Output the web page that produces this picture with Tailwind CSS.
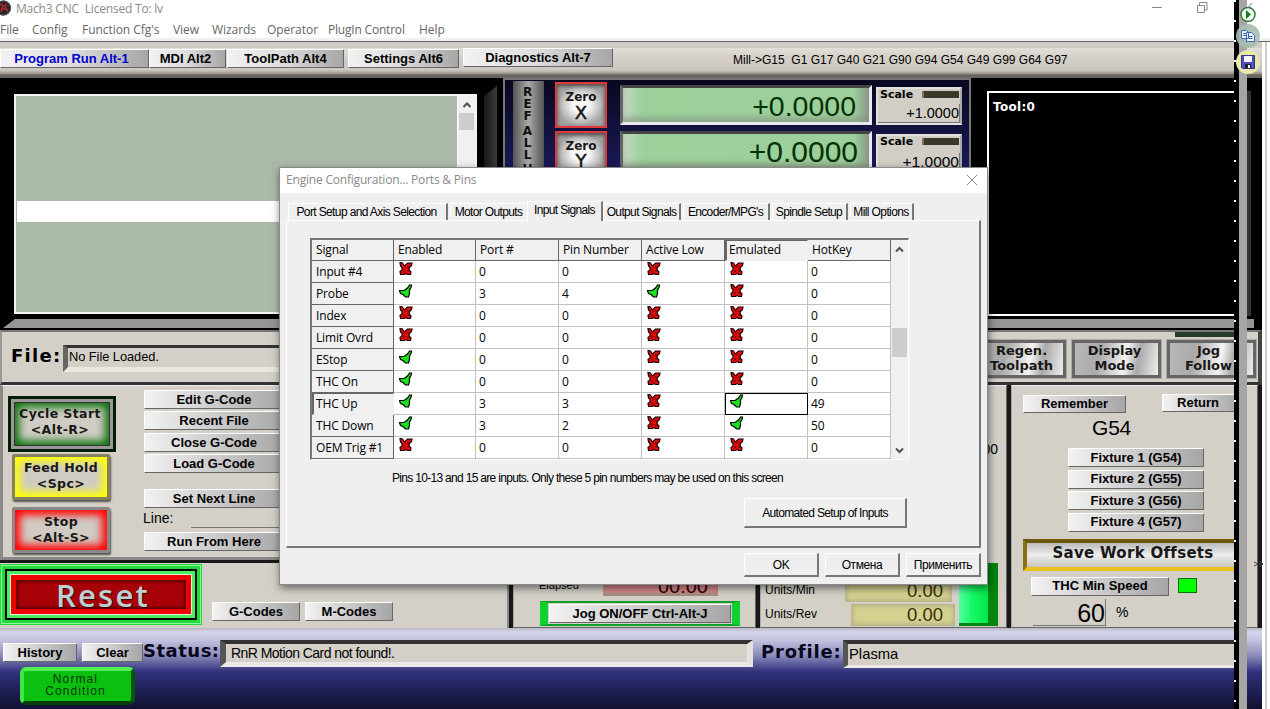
<!DOCTYPE html>
<html lang="en">
<head>
  <meta charset="UTF-8">
  <title>Mach3 CNC</title>
  <script src="https://cdn.jsdelivr.net/npm/@tailwindcss/browser@4"></script>
</head>
<body class="overflow-hidden bg-white font-['Liberation_Sans',Arial,sans-serif] text-black">

<!-- shared icons -->
<svg class="hidden">
  <symbol id="cross" viewBox="0 0 14 14">
    <path d="M1 .5l2.500.5L5 3.500h1L8.500 1H13l-.5 2.500L10 6l.5 2.500L12 10l-.5 2.500H8.500L7 11.500l-1.500 1h-4L1 9.500 3 8V5.500L1.500 4z" fill="#e00c0c" stroke="#1a0000" stroke-width="1.200" />
    <path d="M5.500 4.500l1 1.500M9 4L8 5.500M4.500 10.500L6 8M8.500 8l1 2" stroke="#500" stroke-width=".9" />
  </symbol>
  <symbol id="check" viewBox="0 0 14 14">
    <path d="M.5 6.500H5L8.500 4l2-3h2l-.5 2.500-1.500 2.500v3.500l-1 3.500H6.500L4 10.500l-2.500-1z" fill="#1be01b" stroke="#000" stroke-width="1.200" />
  </symbol>
</svg>

<div class="relative flex h-[709px] w-[1270px] flex-col overflow-hidden">

  <!-- title bar -->
  <header class="flex h-[19px] shrink-0 items-center font-['Open_Sans','Noto_Sans',sans-serif] text-xs tracking-[-.2px] text-[#8a8a8a]">
    <svg class="-mt-[3px] -ml-[4px] h-[16px] w-[16px]" viewBox="0 0 16 16"><circle cx="7.500" cy="8" r="7.500" fill="#2c2425" /><path d="M4 4l4 2 3-2M5 12l2-6M9 6l3 6M5 9h6" stroke="#b02a2a" stroke-width="1.500" fill="none" /><circle cx="7.500" cy="8" r="7" fill="none" stroke="#555" /></svg>
    <span class="-mt-px ml-1 whitespace-pre">Mach3 CNC  Licensed To: lv</span>
    <svg class="-mt-[4px] ml-auto mr-[62px] h-3 w-[56px]" viewBox="0 0 56 12" fill="none" stroke="#888"><path d="M0 5.500h10M45.500 3.500h7v7h-7zM47.500 3v-2.500h7.500v7.500h-2.500" /></svg>
  </header>
  <nav class="flex h-[19px] shrink-0 items-center pt-[3px] font-['Open_Sans','Noto_Sans',sans-serif] text-xs tracking-[-.05px] text-[#666]">
    <span class="w-8">File</span><span class="w-[50px]">Config</span><span class="w-[91px]">Function Cfg's</span><span class="w-[39px]">View</span><span class="w-[55px]">Wizards</span><span class="w-[61px]">Operator</span><span class="w-[91px] tracking-[-.2px]">PlugIn Control</span><span>Help</span>
  </nav>
  <div class="h-[4px] shrink-0 border-b border-[#666] bg-[#f0f0f0]"></div>

  <div class="flex min-h-0 grow">
  <div class="flex w-[1262px] shrink-0 flex-col">

    <!-- screen tabs -->
    <div class="flex h-[36px] shrink-0 items-start bg-[linear-gradient(#d0ccc4_0,#d0ccc4_6px,#e2dfd9_6px,#d6d2cb_14px,#cbc7bf_28px,#a8a39d_31px,#6b655f_33px,#6b655f_36px)] pt-[7px] [&>button]:h-[19px] [&>button]:border [&>button]:border-t-white [&>button]:border-r-[#666] [&>button]:border-b-[#666] [&>button]:border-l-white [&>button]:bg-linear-to-r [&>button]:from-[#f2f2f2] [&>button]:via-[#dcdcdc] [&>button]:to-[#a6a6a6] [&>button]:text-[13px] [&>button]:leading-4 [&>button]:font-bold [&>button]:whitespace-nowrap">
      <button class="w-[149px] pr-[6px] text-[#0000cc]">Program Run Alt-1</button>
      <button class="w-[77px] pr-1">MDI Alt2</button>
      <button class="ml-px w-[117px]">ToolPath Alt4</button>
      <button class="ml-1 w-[111px]">Settings Alt6</button>
      <button class="-mt-px ml-1 w-[150px]">Diagnostics Alt-7</button>
      <span class="mt-[3px] ml-[120px] text-xs leading-4 whitespace-pre">Mill-&gt;G15  G1 G17 G40 G21 G90 G94 G54 G49 G99 G64 G97</span>
    </div>

    <!-- program list, DROs and tool path -->
    <div class="flex h-[252px] shrink-0 bg-black">
      <div class="flex h-full w-[503px] flex-col pt-4">
        <div class="flex h-[220px]">
          <div class="ml-[14px] flex w-[463px] border-2 border-[#f4f4f4] bg-[#abbaa8] pl-px">
            <div class="flex grow flex-col pt-[105px]"><div class="h-[21px] bg-white"></div></div>
            <div class="flex w-[18px] flex-col items-center border-l border-white bg-[#f0f0f0]">
              <svg class="mt-[6px] h-[6px] w-2" viewBox="0 0 8 6" fill="none" stroke="#505050" stroke-width="2"><path d="M.5 5L4 1.500 7.500 5" /></svg>
              <div class="mt-[5px] h-[17px] w-[15px] bg-[#cdcdcd]"></div>
            </div>
          </div>
          <div class="-mt-2 ml-[7px] h-[228px] w-[13px] bg-linear-to-r from-[#181818] to-[#3b3b3b] [clip-path:polygon(0_10px,100%_0,100%_100%,0_100%)]"></div>
        </div>
        <div class="mt-[5px] ml-[3px] h-[9px] bg-[#969696] [clip-path:polygon(12px_0,100%_0,100%_100%,0_100%)]"></div>
      </div>

      <div class="flex h-full w-[468px] border-2 border-[#777] bg-linear-to-b from-[#080820] via-[#1c1c60] via-40% to-[#151540]">
        <div class="mt-px ml-2 flex w-[31px] flex-col items-center bg-linear-to-r from-[#555] via-[#aaa] to-[#555] pt-[5px] pr-[2px] font-['DejaVu_Sans',Verdana,sans-serif] text-[12px] leading-[12px] font-bold text-[#111]">
          <span>R</span><span>E</span><span>F</span><span class="mt-[3px]">A</span><span>L</span><span>L</span><span class="mt-[2px]">H</span>
        </div>
        <div class="mt-[2px] ml-[11px] flex w-[52px] flex-col gap-[3px] [&>button]:flex [&>button]:h-[46px] [&>button]:flex-col [&>button]:items-center [&>button]:border-2 [&>button]:border-[#e03838] [&>button]:bg-[radial-gradient(#f8f8f8_25%,#a4a4a4_70%)] [&>button]:pt-[6px] [&>button]:font-['DejaVu_Sans',Verdana,sans-serif] [&>button]:text-[#181818] [&>button]:inset-shadow-sm [&>button]:inset-shadow-black/60">
          <button><span class="text-xs leading-[15px] font-bold">Zero</span><span class="text-[18px] leading-[15px] [-webkit-text-stroke:.5px_#181818]">X</span></button>
          <button><span class="text-xs leading-[15px] font-bold">Zero</span><span class="text-[18px] leading-[14px] [-webkit-text-stroke:.5px_#181818]">Y</span></button>
        </div>
        <div class="mt-[5px] ml-[13px] flex w-[252px] flex-col gap-[6px] text-right text-[28.500px] leading-[37px] text-[#063006] [&>div]:h-10 [&>div]:border-[3px] [&>div]:border-t-[#444] [&>div]:border-r-[#e8e8f0] [&>div]:border-b-[#e8e8f0] [&>div]:border-l-[#666] [&>div]:bg-[linear-gradient(90deg,#c6d8c4,#9bd09b_8%,#9bcf9b_94%,#8a9688)] [&>div]:inset-shadow-[0_-5px_5px_#88918199]">
          <div class="pr-[13px]">+0.0000</div>
          <div class="pr-[11px] text-[30px] leading-[35px]">+0.0000</div>
        </div>
        <div class="mt-[7px] ml-1 flex w-[86px] flex-col gap-[9px] [&>div]:h-[38px] [&>div]:border-2 [&>div]:border-[#e4e2de] [&>div]:border-r-[#aaa] [&>div]:bg-[#d2cec6]">
          <div>
            <div class="flex h-[15px] justify-between pl-[2px] font-['DejaVu_Sans',Verdana,sans-serif] text-[11px] leading-[11px] font-bold">Scale<i class="mt-[2px] mr-px h-[7px] w-[37px] border-l-2 border-[#77736a] bg-[#3a3828]"></i></div>
            <div class="border-r border-b border-[#777] text-right text-[14.500px] leading-[18px]">+1.0000</div>
          </div>
          <div>
            <div class="flex h-[17px] justify-between pl-[2px] font-['DejaVu_Sans',Verdana,sans-serif] text-[11px] leading-[11px] font-bold">Scale<i class="mt-[2px] mr-px h-[7px] w-[37px] border-l-2 border-[#77736a] bg-[#3a3828]"></i></div>
            <div class="border-r border-[#777] text-right text-[15.500px] leading-[17px]">+1.0000</div>
          </div>
        </div>
      </div>

      <div class="flex grow flex-col pt-[13px]">
        <div class="flex h-[225px]">
          <div class="ml-4 w-[255px] border-2 border-white pt-[6px] pl-[4px] font-['DejaVu_Sans',Verdana,sans-serif] text-xs leading-4 font-bold tracking-[.3px] text-white">Tool:0</div>
          <div class="ml-px w-2 bg-[#333]"></div>
        </div>
        <div class="mt-[3px] mr-2 h-[9px] bg-[#969696]"></div>
      </div>
    </div>

    <!-- loaded file -->
    <div class="relative flex h-[55px] shrink-0 items-start border-t-2 border-r-[4px] border-b-[3px] border-l-2 border-t-[#777] border-r-[#444] border-b-[#333] border-l-[#999] bg-[#d4d0c8]">
      <div class="absolute top-0 left-[1173px] h-[5px] w-[70px] bg-[#263a2a]"></div>
      <span class="mt-[12px] ml-[9px] w-[52px] shrink-0 font-['DejaVu_Sans',Verdana,sans-serif] text-[18px] leading-6 font-bold tracking-[1.300px]">File:</span>
      <div class="mt-[13px] h-[27px] w-[420px] shrink-0 border-t-[3px] border-b-[5px] border-l-[5px] border-t-[#333] border-b-[#eae7e2] border-l-[#666] pl-px text-[12.800px] leading-[18px] tracking-[-.03px]">No File Loaded.</div>
      <div class="mt-[8px] ml-[494px] flex shrink-0 gap-[6px] font-['DejaVu_Sans',Verdana,sans-serif] text-[13px] leading-[15px] font-bold text-[#181818] [&>button]:h-[38px] [&>button]:w-[89px] [&>button]:border-[3px] [&>button]:border-[#666] [&>button]:bg-[linear-gradient(100deg,#b8b8b8,#aaa_30%,#f4f4f4_60%,#aaa_75%,#eee)] [&>button]:pb-[2px] [&>button]:outline [&>button]:outline-[#aaa]">
        <button>Regen.<br>Toolpath</button>
        <button class="pr-1">Display<br>Mode</button>
        <button class="pr-[6px]">Jog<br>Follow</button>
      </div>
    </div>

    <!-- lower panels -->
    <div class="flex h-[243px] shrink-0 gap-[4px] bg-[#181818] pr-1 [&>section]:border [&>section]:border-t-[#eee] [&>section]:border-r-[#666] [&>section]:border-b-[#666] [&>section]:border-l-[#aaa] [&>section]:bg-[#d4d0c8]">
      <div class="flex w-[509px] shrink-0 flex-col gap-[3px]">
        <section class="flex h-[175px] border-t border-r-2 border-b-[3px] border-l-[3px] border-[#888] border-t-[#eee] bg-[#d4d0c8]">
          <div class="mt-[10px] ml-[5px] flex w-[108px] flex-col font-['DejaVu_Sans',Verdana,sans-serif] text-[12.500px] leading-[16px] font-bold tracking-[.4px] text-[#181818]">
            <button class="h-[56px] border-[3px] border-[#051c08] bg-[#999] p-[3px]"><span class="block h-full border border-[#333] bg-[#d0ccc4] pt-[3px] pr-1 tracking-[.4px] inset-shadow-[0_0_9px_4px_#087008]">Cycle Start<br>&lt;Alt-R&gt;</span></button>
            <button class="mt-[2px] ml-[4px] h-[46px] w-[98px] rounded-xs border-[3px] border-[#85815f] bg-[#d0ccc4] pb-[2px] inset-shadow-[0_0_8px_5px_#ffff00] shadow-[1px_2px_2px_#555]">Feed Hold<br>&lt;Spc&gt;</button>
            <button class="mt-[7px] ml-[4px] h-[46px] w-[98px] rounded-xs border-[3px] border-[#888] bg-[#d0ccc4] inset-shadow-[0_0_8px_5px_#ff0000] shadow-[1px_2px_2px_#555]">Stop<br>&lt;Alt-S&gt;</button>
          </div>
          <div class="mt-[4px] ml-[28px] flex w-[144px] flex-col [&>button]:h-[19px] [&>button]:border [&>button]:border-t-white [&>button]:border-r-[#666] [&>button]:border-b-[#666] [&>button]:border-l-white [&>button]:bg-linear-to-r [&>button]:from-[#f2f2f2] [&>button]:to-[#a6a6a6] [&>button]:pr-1 [&>button]:text-[13px] [&>button]:leading-4 [&>button]:font-bold">
            <button>Edit G-Code</button>
            <button class="mt-[2px]">Recent File</button>
            <button class="mt-[3px]">Close G-Code</button>
            <button class="mt-[2px]">Load G-Code</button>
            <button class="mt-[16px]">Set Next Line</button>
            <div class="-ml-px flex h-[22px] pt-[2px] text-sm leading-4">Line:<i class="ml-[18px] h-[18px] w-[120px] border-b border-[#777]"></i></div>
            <button class="mt-[2px]">Run From Here</button>
          </div>
        </section>
        <section class="flex grow border-r-2 border-[#888] bg-[#d4d0c8]">
          <div class="mt-px h-[61px] w-[202px] border-[5px] border-[#25d83c] bg-black outline-1 -outline-offset-2 outline-[#8cff98]">
            <div class="m-[2px] h-[47px] border-[3px] border-[#4bee62] bg-[#d8f8d8] p-px">
              <button class="block h-[39px] w-full border-[5px] border-[#f00000] bg-[#a80008] pl-1 font-['Open_Sans','Noto_Sans',sans-serif] text-[31px] leading-[26px] font-semibold tracking-[2.200px] text-[#bcd0d4] [text-shadow:1px_1px_1px_#300] inset-shadow-[0_0_3px_2px_#600000]">Reset</button>
            </div>
          </div>
          <div class="mt-[39px] ml-[10px] flex gap-[5px] [&>button]:h-[19px] [&>button]:w-[88px] [&>button]:border [&>button]:border-t-white [&>button]:border-r-[#666] [&>button]:border-b-[#666] [&>button]:border-l-white [&>button]:bg-linear-to-r [&>button]:from-[#f2f2f2] [&>button]:to-[#a6a6a6] [&>button]:text-[13px] [&>button]:leading-4 [&>button]:font-bold">
            <button>G-Codes</button>
            <button>M-Codes</button>
          </div>
        </section>
      </div>

      <section class="flex w-[243px] shrink-0 flex-col justify-end border-b-2 border-l-4 pb-px">
        <div class="flex h-[22px]">
          <span class="ml-[25px] w-[64px] text-[11px] leading-[22px]">Elapsed</span>
          <div class="h-[22px] w-[115px] bg-[#d88a8e] pr-[10px] text-right text-[20px] leading-[25px] text-[#300] inset-shadow-[0_-3px_3px_#a09080]">00:00</div>
        </div>
        <div class="mt-[5px] ml-[26px] w-[200px] border-x-8 border-y-2 border-x-[#10d030] border-y-[#10a028] bg-[#d4d0c8] p-px">
          <button class="block h-[19px] w-full border border-t-white border-r-[#666] border-b-[#666] border-l-white bg-linear-to-r from-[#f2f2f2] to-[#a6a6a6] text-[13px] leading-4 font-bold">Jog ON/OFF Ctrl-Alt-J</button>
        </div>
      </section>

      <section class="flex w-[247px] shrink-0 items-end justify-between border-b-2 border-l-4 pb-px">
        <div class="flex w-[194px] flex-col gap-[2px] pl-[4px] text-xs leading-5">
          <div class="flex h-[22px]"><span class="w-[80px] shrink-0">Units/Min</span><div class="w-[107px] shrink-0 bg-[#d4d190] pr-[9px] text-right text-[18.500px] leading-[22px] text-[#333000] inset-shadow-[0_0_4px_2px_#b4b08a]">0.00</div></div>
          <div class="flex h-[22px]"><span class="w-[86px] shrink-0">Units/Rev</span><div class="w-[104px] shrink-0 bg-[#d4d190] pr-[12px] text-right text-[18.500px] leading-[22px] text-[#333000] inset-shadow-[0_0_4px_2px_#b4b08a]">0.00</div></div>
        </div>
        <div class="mr-[8px] flex h-full w-[39px] flex-col justify-between">
          <span class="mt-[53px] text-right text-sm leading-5 whitespace-nowrap">0.00</span>
          <div class="h-[63px] border-r-[10px] border-b-[3px] border-[#008510] bg-linear-to-r from-[#50ffa4] via-[#18fa68] via-40% to-[#00e848]"></div>
        </div>
      </section>

      <section class="flex grow flex-col border-r-4 border-b-2 border-l-4 pl-[3px] [&_button]:border [&_button]:border-t-white [&_button]:border-r-[#666] [&_button]:border-b-[#666] [&_button]:border-l-white [&_button]:bg-linear-to-r [&_button]:from-[#f2f2f2] [&_button]:to-[#a6a6a6] [&_button]:text-[13px] [&_button]:leading-4 [&_button]:font-bold">
        <div class="mt-[8px] ml-[8px] flex">
          <button class="mt-px h-[18px] w-[103px]">Remember</button>
          <button class="ml-[36px] h-[18px] w-[80px] pr-2">Return</button>
        </div>
        <span class="mt-[2px] ml-[77px] text-[21px] leading-[26px] tracking-[-.2px]">G54</span>
        <div class="mt-[7px] ml-[53px] flex w-[136px] flex-col gap-[2.500px] [&>button]:h-[19px]">
          <button>Fixture 1 (G54)</button>
          <button>Fixture 2 (G55)</button>
          <button>Fixture 3 (G56)</button>
          <button>Fixture 4 (G57)</button>
        </div>
        <div class="mt-[7px] ml-[8px] flex h-[32px] w-[222px] items-center justify-center border-4 border-t-[#6d5708] border-r-[#a88b18] border-b-[#e8c020] border-l-[#8b7010] bg-linear-to-b from-[#bbb] via-[#eee] to-[#c8c4bc] pr-[2px] pb-[3px] font-['DejaVu_Sans',Verdana,sans-serif] text-[15px] font-bold tracking-[.3px] text-[#181818]">Save Work Offsets</div>
        <div class="mt-[6px] ml-[16px] flex">
          <button class="h-[19px] w-[138px]">THC Min Speed</button>
          <i class="mt-px ml-[9px] h-[15px] w-[19px] border border-[#087008] bg-[#00ff00]"></i>
        </div>
        <div class="mt-[3px] ml-[18px] flex items-center">
          <span class="h-[27px] w-[73px] border-r border-b border-[#777] text-right text-[25px] leading-[29px]">60</span>
          <span class="ml-[10px] text-sm">%</span>
        </div>
      </section>
    </div>

    <!-- status area -->
    <footer class="flex grow flex-col bg-[linear-gradient(#b9b7c6_0,#d6d5ea_4px,#c4c3e0_12px,#8988ba_28px,#30307c_44px,#242460_58px,#101030_81px)] pt-[12px]">
      <div class="flex h-[28px] items-start pr-[27px] [&>button]:h-[19px] [&>button]:border [&>button]:border-t-white [&>button]:border-r-[#666] [&>button]:border-b-[#666] [&>button]:border-l-white [&>button]:bg-linear-to-r [&>button]:from-[#f2f2f2] [&>button]:to-[#a6a6a6] [&>button]:text-[13px] [&>button]:leading-4 [&>button]:font-bold">
        <button class="mt-[3px] ml-[3px] w-[74px]">History</button>
        <button class="mt-[3px] ml-[5px] w-[61px]">Clear</button>
        <span class="-mt-px w-[77px] font-['DejaVu_Sans',Verdana,sans-serif] text-[18px] leading-6 font-bold tracking-[.5px] text-[#08081c]">Status:</span>
        <div class="h-[27px] w-[533px] border-t-4 border-r-[6px] border-b-[5px] border-l-[6px] border-t-[#333] border-r-[#e4e2e0] border-b-[#eae8e8] border-l-[#555] bg-[#d4d0c8] pl-[5px] text-[14px] leading-[19px] tracking-[-.55px]">RnR Motion Card not found!.</div>
        <span class="ml-[8px] w-[82px] font-['DejaVu_Sans',Verdana,sans-serif] text-[18px] leading-6 font-bold tracking-[.8px] text-[#08081c]">Profile:</span>
        <div class="h-[28px] grow border-t-4 border-b-[3px] border-l-[5px] border-t-[#333] border-b-[#eae8e8] border-l-[#555] bg-[#d4d0c8] pl-px text-[14.800px] leading-[20px]">Plasma</div>
      </div>
      <div class="mt-[-1px] ml-5 flex h-[38px] w-[115px] items-center justify-center rounded-md border-4 border-t-[#50f050] border-r-[#055808] border-b-[#044006] border-l-[#40e840] bg-[#0cc010] pr-1 pb-[2px] text-center text-xs leading-[12px] tracking-[1.100px] text-[#033803]">Normal<br>Condition</div>
    </footer>
  </div>
  <div class="w-[3px] bg-white"></div>
  <div class="w-[2px] bg-[#d0ccc4]"></div>
  </div>

  <!-- capture strip on the right -->
  <div class="absolute top-0 left-[1234px] h-full w-[13px] border-r-8 border-[#a6a6a6] bg-black bg-[repeating-linear-gradient(#fff_0,#fff_2px,#000_2px,#000_20px)] bg-[length:2px_100%] bg-no-repeat"></div>
  <svg class="absolute top-0 left-[1236px] h-[76px] w-6" viewBox="0 0 24 76">
    <path d="M12 8l4-5" stroke="#777" />
    <circle cx="12" cy="14.500" r="7" fill="#f6fff6" stroke="#2c7c38" stroke-width="1.500" /><path d="M10 10v9l5-4.500z" fill="#108018" />
    <circle cx="12" cy="36" r="12" fill="#a8bcb0" opacity=".9" />
    <g fill="#f4f8ff" stroke="#3868c0"><path d="M5.500 30.500h5l2 2v6h-7zM10.500 32.500h5l3 3v6h-8z" /><path d="M7 33.500h3M7 35.500h3M12.500 36.500h4M12.500 38.500h4" /></g>
    <circle cx="12" cy="62" r="12" fill="#ece8a8" />
    <path d="M5.500 55.500h13v13h-12l-1-1z" fill="#4c50c0" stroke="#30348c" /><path d="M8 56h8v6H8z" fill="#f4f4ff" /><path d="M9 64h6v4H9z" fill="#222" /><path d="M12 65h2v3h-2z" fill="#fff" />
  </svg>
  <svg class="absolute top-[558px] left-[1253px] h-3 w-3" viewBox="0 0 12 12"><path d="M1 4l4 2-4 2M5 6h5M7 3l3 3-3 3" stroke="#444" fill="none" /></svg>

  <!-- ports & pins dialog -->
  <div class="absolute top-[167px] left-[279px] flex h-[418px] w-[709px] flex-col border border-[#8a8a8a] bg-[#efefef] shadow-[1px_3px_8px_#0008]">
    <div class="flex h-[25px] shrink-0 items-center justify-between bg-white pr-[9px] pb-px pl-[6px] font-['Open_Sans','Noto_Sans',sans-serif] text-xs tracking-[-.2px] text-[#8a8a8a]">
      Engine Configuration... Ports &amp; Pins
      <svg class="h-[12px] w-[12px]" viewBox="0 0 12 12" stroke="#888"><path d="M1 1l10 10M11 1L1 11" /></svg>
    </div>

    <div class="mt-[8px] flex h-[19px] shrink-0 items-end pl-[8px] text-xs [&>span]:h-[17px] [&>span]:border-t [&>span]:border-r-2 [&>span]:border-l [&>span]:border-t-white [&>span]:border-r-[#777] [&>span]:border-l-white [&>span]:text-center [&>span]:leading-4 [&>span]:whitespace-nowrap">
      <span class="w-[160px] pr-[2px] tracking-[-.62px]">Port Setup and Axis Selection</span>
      <span class="ml-[2px] w-[77px] border-r-0! pr-px tracking-[-.65px]">Motor Outputs</span>
      <span class="z-10 -mb-px h-[20px]! w-[76px] bg-[#efefef] tracking-[-.65px]">Input Signals</span>
      <span class="w-[78px] tracking-[-.65px]">Output Signals</span>
      <span class="ml-[2px] w-[87px] pr-px tracking-[-.65px]">Encoder/MPG's</span>
      <span class="ml-[2px] w-[76px] pr-px tracking-[-.65px]">Spindle Setup</span>
      <span class="ml-[2px] w-[64px] pr-px tracking-[-.6px]">Mill Options</span>
    </div>

    <div class="mx-[6px] flex h-[328px] shrink-0 flex-col border border-t-white border-r-2 border-r-[#777] border-b-2 border-b-[#777] border-l-white pt-[17px] pl-[23px]">
      <div class="flex h-[222px] w-[599px] shrink-0 border-t-2 border-r border-b border-l-2 border-[#777] border-r-white border-b-white">
        <table class="h-[219px] w-[579px] shrink-0 table-fixed border-separate border-spacing-0 font-['Open_Sans','Noto_Sans',sans-serif] text-xs leading-[18px] tracking-[-.15px]">
          <colgroup><col class="w-[82px]"><col class="w-[82px]"><col class="w-[83px]"><col class="w-[83px]"><col class="w-[83px]"><col class="w-[83px]"><col class="w-[83px]"></colgroup>
          <tbody id="signals"></tbody>
        </table>
        <div class="flex grow flex-col items-center bg-[#f0f0f0]">
          <svg class="mt-[6px] h-[7px] w-[9px]" viewBox="0 0 9 7" fill="none" stroke="#505050" stroke-width="2"><path d="M1 5.500L4.500 2 8 5.500" /></svg>
          <div class="mt-[75px] h-[29px] w-[15px] bg-[#cdcdcd]"></div>
          <svg class="mt-auto mb-[5px] h-[7px] w-[9px]" viewBox="0 0 9 7" fill="none" stroke="#505050" stroke-width="2"><path d="M1 1.500L4.500 5 8 1.500" /></svg>
        </div>
      </div>
      <p class="mt-[10px] ml-[82px] text-xs leading-4 tracking-[-.69px]">Pins 10-13 and 15 are inputs. Only these 5 pin numbers may be used on this screen</p>
      <button class="mt-[12px] ml-[434px] h-[30px] w-[163px] border border-t-white border-r-2 border-r-[#777] border-b-2 border-b-[#777] border-l-white text-xs tracking-[-.66px]">Automated Setup of Inputs</button>
    </div>

    <div class="mt-[5px] mr-[6px] flex justify-end gap-[6px] text-xs tracking-[-.4px] [&>button]:h-[24px] [&>button]:w-[75px] [&>button]:border [&>button]:border-t-white [&>button]:border-r-2 [&>button]:border-r-[#777] [&>button]:border-b-2 [&>button]:border-b-[#777] [&>button]:border-l-white">
      <button>OK</button>
      <button>Отмена</button>
      <button>Применить</button>
    </div>
  </div>
</div>

<script>
  // name, enabled, port, pin, active low, emulated, hotkey
  const signals = [
    ['Input #4', 0, 0, 0, 0, 0, 0],
    ['Probe', 1, 3, 4, 1, 0, 0],
    ['Index', 0, 0, 0, 0, 0, 0],
    ['Limit Ovrd', 0, 0, 0, 0, 0, 0],
    ['EStop', 1, 0, 0, 0, 0, 0],
    ['THC On', 1, 0, 0, 0, 0, 0],
    ['THC Up', 1, 3, 3, 0, 1, 49],
    ['THC Down', 1, 3, 2, 0, 1, 50],
    ['OEM Trig #1', 0, 0, 0, 0, 0, 0],
  ];
  const heads = ['Signal', 'Enabled', 'Port #', 'Pin Number', 'Active Low', 'Emulated', 'HotKey'];

  const head = heads.map((h) => `<th class="h-[21px] bg-[#f0f0f0] p-0 text-left font-normal ${h === 'Emulated' ? 'border-t border-r border-b border-l-2 border-t-[#666] border-r-[#eee] border-b-[#eee] border-l-[#666] pb-px pl-[2px] leading-[16px]' : 'border-r border-b border-[#666] pl-1'}">${h}</th>`).join('');
  const icon = (on) => `<svg class="-mt-[3px] ml-px h-[14px] w-[14px]"><use href="#${on ? 'check' : 'cross'}" /></svg>`;

  document.getElementById('signals').innerHTML = `<tr>${head}</tr>` + signals.map((row) => {
    const cells = row.map((v, i) => {
      if (i === 0) return `<td class="h-[22px] bg-[#f0f0f0] p-0 ${v === 'THC Up' ? 'border-t border-r border-b border-l-2 border-[#666] border-r-[#eee] border-b-[#eee] pl-[2px]' : 'border-r border-b border-[#666] pl-1'}">${v}</td>`;
      const flag = i === 1 || i === 4 || i === 5;
      const picked = row[0] === 'THC Up' && i === 5;
      return `<td class="h-[22px] border-r border-b border-[#c0c0c0] bg-white p-0 ${flag ? 'pb-[3px] pl-1' : 'pl-[3px]'} ${picked ? 'outline -outline-offset-1 outline-black' : ''}">${flag ? icon(v) : v}</td>`;
    }).join('');
    return `<tr>${cells}</tr>`;
  }).join('');
</script>
</body>
</html>
